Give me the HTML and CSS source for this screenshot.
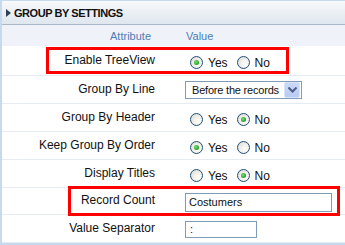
FILE: index.html
```html
<!DOCTYPE html>
<html>
<head>
<meta charset="utf-8">
<link rel="stylesheet" href="styles.css">
</head>
<body>
<div class="panel">
  <div class="head"><span class="tri"></span><span class="title">GROUP BY SETTINGS</span></div>
  <div class="colhead"><div class="ch-attr">Attribute</div><div class="ch-val">Value</div></div>

  <div class="row r1">
    <div class="lbl">Enable TreeView</div>
    <div class="radios"><span class="radio on"></span><span class="opt">Yes</span><span class="radio"></span><span class="opt">No</span></div>
    <div class="mark m1"></div>
  </div>

  <div class="row">
    <div class="lbl">Group By Line</div>
    <div class="val">
      <div class="select"><span class="sel-text">Before the records</span><span class="sel-btn"><svg width="9" height="6" viewBox="0 0 9 6"><path d="M0.5 0.5 L4.5 4.5 L8.5 0.5" fill="none" stroke="#4a5f86" stroke-width="2"/></svg></span></div>
    </div>
  </div>

  <div class="row">
    <div class="lbl">Group By Header</div>
    <div class="radios"><span class="radio"></span><span class="opt">Yes</span><span class="radio on"></span><span class="opt">No</span></div>
  </div>

  <div class="row">
    <div class="lbl">Keep Group By Order</div>
    <div class="radios"><span class="radio on"></span><span class="opt">Yes</span><span class="radio"></span><span class="opt">No</span></div>
  </div>

  <div class="row">
    <div class="lbl">Display Titles</div>
    <div class="radios"><span class="radio"></span><span class="opt">Yes</span><span class="radio on"></span><span class="opt">No</span></div>
  </div>

  <div class="row r6">
    <div class="lbl">Record Count</div>
    <div class="val"><div class="input wide">Costumers</div></div>
    <div class="mark m2"></div>
  </div>

  <div class="row">
    <div class="lbl">Value Separator</div>
    <div class="val"><div class="input small">:</div></div>
  </div>
</div>
</body>
</html>
```
FILE: styles.css
```css
html, body {
  margin: 0;
  padding: 0;
  background: #fff;
}
body {
  font-family: "Liberation Sans", Arial, sans-serif;
  font-size: 12px;
  color: #111;
}
.panel {
  width: 343px;
  height: 243px;
  border-left: 2px solid #c6d9ef;
  border-bottom: 2px solid #c6d9ef;
  overflow: hidden;
}
.head {
  box-sizing: border-box;
  height: 25px;
  border-top: 1px solid #c8daee;
  border-bottom: 1px solid #a9b7c6;
  background: linear-gradient(#f7f9fb, #dfe6ee);
  display: flex;
  align-items: center;
  padding-left: 4px;
}
.tri {
  width: 0;
  height: 0;
  border-top: 4px solid transparent;
  border-bottom: 4px solid transparent;
  border-left: 5px solid #2e4256;
  margin-right: 3px;
  margin-top: 1px;
}
.title {
  font-weight: bold;
  font-size: 11px;
  letter-spacing: -0.45px;
  color: #111;
}
.colhead {
  box-sizing: border-box;
  height: 21px;
  background: #eff3f9;
  display: grid;
  grid-template-columns: 183px 1fr;
  align-items: center;
  font-size: 11px;
  color: #4c7db5;
}
.ch-attr {
  text-align: right;
  padding-right: 34px;
}
.ch-val {
  padding-left: 1px;
}
.row {
  position: relative;
  box-sizing: border-box;
  height: 28px;
  border-bottom: 1px solid #e6ebf1;
  display: grid;
  grid-template-columns: 183px 1fr;
  align-items: center;
}
.row.r1 { height: 30px; }
.row.r6 { height: 27px; }
.lbl {
  text-align: right;
  padding-right: 30px;
  margin-top: -2px;
}
.radios {
  display: flex;
  align-items: center;
  padding-left: 5px;
  margin-top: 4px;
}
.radio {
  box-sizing: border-box;
  width: 13px;
  height: 13px;
  border-radius: 50%;
  border: 1px solid #1f4f7a;
  background: radial-gradient(circle at 65% 65%, #ffffff 0%, #f0efe9 45%, #d6d5cc 100%);
  margin-right: 5px;
  position: relative;
}
.radio.on::after {
  content: "";
  position: absolute;
  left: 3px;
  top: 3px;
  width: 5px;
  height: 5px;
  border-radius: 50%;
  background: radial-gradient(circle at 40% 40%, #7ee07e 0%, #2aa82a 60%, #1a8a1a 100%);
}
.opt {
  margin-right: 9px;
}
.val {
  display: flex;
  align-items: center;
}
.select {
  box-sizing: border-box;
  width: 117px;
  height: 18px;
  border: 1px solid #7f9db9;
  background: #fff;
  display: flex;
  align-items: center;
  justify-content: space-between;
  font-size: 11px;
  margin-top: 1px;
}
.sel-text {
  padding-left: 6px;
  letter-spacing: -0.2px;
}
.sel-btn {
  box-sizing: border-box;
  width: 16px;
  height: 16px;
  margin-right: 1px;
  background: linear-gradient(#cad9fb, #b9cbf4);
  border: 1px solid #d7e2fb;
  border-radius: 2px;
  display: flex;
  align-items: center;
  justify-content: center;
}
.input {
  box-sizing: border-box;
  border: 1px solid #7f9db9;
  background: #fff;
  font-size: 11px;
  padding-left: 3px;
  display: flex;
  align-items: center;
}
.input.wide {
  width: 147px;
  height: 19px;
  margin-top: 2px;
}
.input.small {
  width: 72px;
  height: 17px;
  padding-left: 4px;
  margin-top: 1px;
}
.mark {
  position: absolute;
  box-sizing: border-box;
  border: 3px solid #ff0000;
}
.mark::before {
  content: "";
  position: absolute;
  left: 0px;
  top: 0px;
  right: -7px;
  bottom: -7px;
  border: 4px solid rgba(0, 0, 0, 0.3);
  filter: blur(2px);
  z-index: -1;
}
.m1 {
  left: 44px;
  top: 1px;
  width: 243px;
  height: 27px;
}
.m2 {
  left: 66px;
  top: -2px;
  width: 272px;
  height: 30px;
}
```
